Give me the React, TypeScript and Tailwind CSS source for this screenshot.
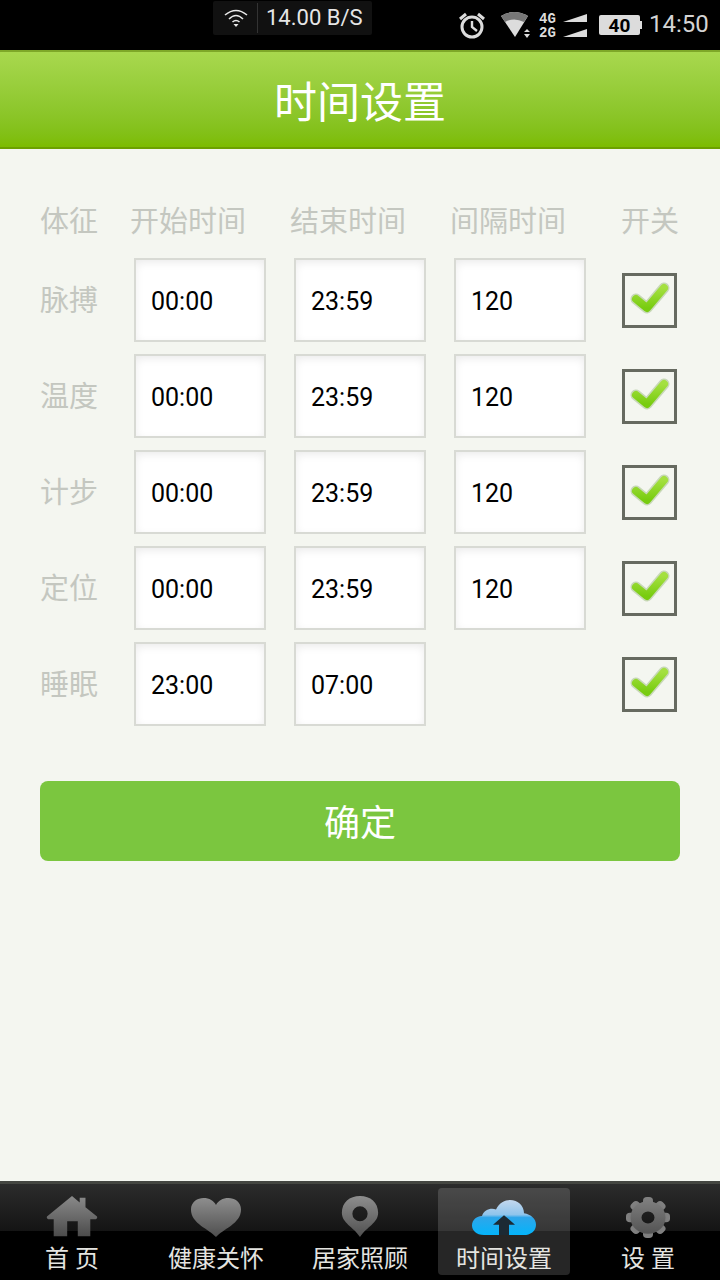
import React from "react";

const cjk = "font-['Roboto','Noto_Sans_CJK_SC',sans-serif]";

function Grad({ id, from, to }: { id: string; from: string; to: string }) {
  return (
    <linearGradient id={id} x1="0" y1="0" x2="0" y2="1">
      <stop offset="0" stopColor={from} />
      <stop offset="1" stopColor={to} />
    </linearGradient>
  );
}

function Field({ value }: { value: string }) {
  return (
    <div className="w-[132px] h-[84px] shrink-0 flex items-center pl-[15px] pt-[4px] text-[25px] text-black bg-white border-2 border-[#d8dad4] shadow-[inset_0_3px_10px_-1px_rgba(0,0,0,0.09)] font-['Roboto',sans-serif]">
      {value}
    </div>
  );
}

function Check() {
  return (
    <div className="w-[55px] h-[55px] shrink-0 border-[3px] border-[#666a60] flex items-center justify-center">
      <svg width="42" height="36" viewBox="0 0 42 36">
        <defs>
          <Grad id="chk" from="#a4e040" to="#78cc10" />
        </defs>
        <path d="M7 17 L18 26 L35 6" fill="none" stroke="#c8d8b8" strokeWidth="11" strokeLinecap="round" strokeLinejoin="round" />
        <path d="M7 17 L18 26 L35 6" fill="none" stroke="url(#chk)" strokeWidth="8" strokeLinejoin="round" strokeLinecap="round" />
      </svg>
    </div>
  );
}

function Row({ label, a, b, c }: { label: string; a: string; b: string; c?: string }) {
  return (
    <div className="flex items-center h-[84px] mb-[12px]">
      <div className="w-[94px] shrink-0 pt-[2px] text-[29px] leading-none text-[#c4c7c0]">{label}</div>
      <div className="flex gap-[28px] w-[488px] shrink-0">
        <Field value={a} />
        <Field value={b} />
        {c ? <Field value={c} /> : null}
      </div>
      <Check />
    </div>
  );
}

function HomeIcon() {
  return (
    <svg width="52" height="43" viewBox="0 0 54 46" preserveAspectRatio="none">
      <defs>
        <Grad id="ic1" from="#8a8a8a" to="#4c4c4c" />
      </defs>
      <path fillRule="evenodd" d="M27 1 L35 8 L35 3 L41 3 L41 13 L53 23 Q54 26 50 26 L46 26 L46 44 L33 44 L33 28 L22 28 L22 44 L8 44 L8 26 L4 26 Q0 26 1 23 Z" fill="url(#ic1)" />
    </svg>
  );
}

function HeartIcon() {
  return (
    <svg width="52" height="41" viewBox="0 0 54 46" preserveAspectRatio="none">
      <defs>
        <Grad id="ic2" from="#8e8e8e" to="#4e4e4e" />
      </defs>
      <path d="M27 45 C20 36 1 30 1 14 C1 5 8 1 14 1 C20 1 25 4 27 9 C29 4 34 1 40 1 C46 1 53 5 53 14 C53 30 34 36 27 45 Z" fill="url(#ic2)" />
    </svg>
  );
}

function PinIcon() {
  return (
    <svg width="42" height="43" viewBox="0 0 44 46" preserveAspectRatio="none">
      <defs>
        <Grad id="ic3" from="#8e8e8e" to="#505050" />
      </defs>
      <path fillRule="evenodd" d="M22 45 C15 34 3 30 3 19 C3 8 11 1 22 1 C33 1 41 8 41 19 C41 30 29 34 22 45 Z M22 12 A8 8 0 1 0 22 28 A8 8 0 1 0 22 12 Z" fill="url(#ic3)" />
    </svg>
  );
}

function CloudIcon() {
  return (
    <svg width="64" height="36" viewBox="0 0 64 38" className="mb-[2px]" preserveAspectRatio="none">
      <defs>
        <linearGradient id="ic4" x1="0" y1="0" x2="0" y2="1">
          <stop offset="0" stopColor="#c4d8ee" />
          <stop offset="0.42" stopColor="#8fc4ec" />
          <stop offset="0.5" stopColor="#2ea6ea" />
          <stop offset="1" stopColor="#04b4fa" />
        </linearGradient>
      </defs>
      <path d="M12 37 C4 37 0 32 0 27 C0 21 5 17 10 17 C12 10 19 8 24 10 C27 3 33 0 38 0 C46 0 52 6 52 14 C59 15 64 20 64 26 C64 33 58 37 52 37 Z" fill="url(#ic4)" />
      <path d="M32 16 L43 26 L37 26 L37 37 L27 37 L27 26 L21 26 Z" fill="#1c2a34" />
    </svg>
  );
}

function GearIcon() {
  const teeth = [0, 45, 90, 135, 180, 225, 270, 315];
  return (
    <svg width="46" height="41" viewBox="0 0 46 44" preserveAspectRatio="none">
      <defs>
        <linearGradient id="ic5" gradientUnits="userSpaceOnUse" x1="0" y1="0" x2="0" y2="44">
          <stop offset="0" stopColor="#828282" />
          <stop offset="1" stopColor="#4e4e4e" />
        </linearGradient>
      </defs>
      {teeth.map((t) => (
        <rect key={t} x="18" y="0" width="10" height="12" rx="4" fill="url(#ic5)" transform={`rotate(${t} 23 22)`} />
      ))}
      <circle cx="23" cy="22" r="12" fill="none" stroke="url(#ic5)" strokeWidth="11" />
    </svg>
  );
}

function Tab({ label, active, icon }: { label: string; active?: boolean; icon: React.ReactNode }) {
  return (
    <div className="relative w-[144px] h-full flex flex-col items-center">
      {active ? (
        <div className="absolute left-[6px] top-[4px] w-[132px] h-[87px] rounded-[4px] bg-white/15" />
      ) : null}
      <div className="relative h-[44px] mt-[10px] flex items-end justify-center">{icon}</div>
      <div className="relative mt-[4px] text-[24px] leading-[34px] text-[#e4e4e0] whitespace-pre">{label}</div>
    </div>
  );
}

export default function App() {
  return (
    <div className={`w-[720px] h-[1280px] flex flex-col overflow-hidden bg-[#f4f6f0] ${cjk}`}>
      {/* status bar */}
      <div className="h-[50px] shrink-0 bg-black flex items-start relative">
        <div className="ml-[213px] mt-[1px] w-[159px] h-[34px] bg-[#111111] rounded-[2px] flex items-center">
          <div className="w-[44px] flex justify-center pl-[2px]">
            <svg width="24" height="20" viewBox="0 0 24 20" fill="none" stroke="#e8e8e8" strokeWidth="1.6">
              <path d="M1 7 Q12 -2 23 7" />
              <path d="M5 11 Q12 4 19 11" />
              <path d="M8.5 14 Q12 11 15.5 14" />
              <path d="M12 19 L9.5 16 L14.5 16 Z" fill="#e8e8e8" stroke="none" />
            </svg>
          </div>
          <div className="w-px h-[30px] bg-[#333333]" />
          <div className="ml-[8px] text-[22px] leading-none text-[#e6e6e6] font-['Roboto',sans-serif]">14.00 B/S</div>
        </div>
        <div className="ml-[86px] mt-[12px] flex items-start">
          <svg width="28" height="27" viewBox="0 0 28 27" fill="none" stroke="#dcdcdc">
            <circle cx="14" cy="15" r="10" strokeWidth="3" />
            <path d="M14 9 L14 15 L19 19" strokeWidth="2.4" />
            <path d="M2 7 L8 2 M26 7 L20 2" strokeWidth="3" />
          </svg>
          <svg className="ml-[15px]" width="30" height="26" viewBox="0 0 30 26">
            <path d="M0 4 Q13 -4 27 4 L14 25 Z" fill="#dcdcdc" />
            <path d="M0 4 Q13 -4 27 4 L23 10 Q13 5 4 10 Z" fill="#777777" />
            <path d="M26 17 L29 20 L23 20 Z M26 26 L29 22 L23 22 Z" fill="#dcdcdc" />
          </svg>
          <div className="ml-[8px] w-[20px] flex flex-col text-[14px] leading-[14px] font-bold text-[#dcdcdc] font-['Liberation_Mono',monospace]">
            <span>4G</span>
            <span>2G</span>
          </div>
          <svg className="ml-[4px]" width="25" height="26" viewBox="0 0 25 26" fill="#dcdcdc">
            <path d="M0 10 L24 2 L24 10 Z" />
            <path d="M0 25 L24 17 L24 25 Z" />
          </svg>
          <div className="ml-[11px] mt-[3px] flex items-center">
            <div className="w-[41px] h-[20px] rounded-[2px] bg-[#dcdcdc] flex items-center justify-center text-[19px] leading-none font-bold text-black font-['Roboto',sans-serif]">40</div>
            <div className="w-[2px] h-[8px] bg-[#dcdcdc]" />
          </div>
          <div className="ml-[7px] -mt-[1px] text-[24px] leading-[26px] text-[#d4d4d4] font-['Roboto',sans-serif]">14:50</div>
        </div>
      </div>

      {/* header */}
      <div className="h-[99px] shrink-0 flex items-center justify-center pt-[7px] border-t-2 border-b-2 border-t-[#7ea828] border-b-[#6ca000] bg-gradient-to-b from-[#a8d84e] to-[#7cbc00]">
        <span className="text-[43px] leading-none text-white">时间设置</span>
      </div>

      {/* table */}
      <div className="flex-1 pl-[40px] pr-[40px]">
        <div className="flex items-center h-[29px] mt-[59px] mb-[21px] text-[29px] leading-none text-[#c4c7c0] whitespace-nowrap">
          <span className="w-[90px]">体征</span>
          <span className="w-[160px]">开始时间</span>
          <span className="w-[160px]">结束时间</span>
          <span className="w-[171px]">间隔时间</span>
          <span>开关</span>
        </div>
        <Row label="脉搏" a="00:00" b="23:59" c="120" />
        <Row label="温度" a="00:00" b="23:59" c="120" />
        <Row label="计步" a="00:00" b="23:59" c="120" />
        <Row label="定位" a="00:00" b="23:59" c="120" />
        <Row label="睡眠" a="23:00" b="07:00" />
        <div className="mt-[55px] h-[80px] rounded-[8px] bg-[#7bc63f] flex items-center justify-center pt-[5px] text-[36px] leading-none text-white">
          确定
        </div>
      </div>

      {/* tab bar */}
      <div className="h-[99px] shrink-0 flex border-t-[3px] border-[#444641] bg-[linear-gradient(to_bottom,#2c2c2c_0,#141414_47px,#000000_47px)]">
        <Tab label="首 页" icon={<HomeIcon />} />
        <Tab label="健康关怀" icon={<HeartIcon />} />
        <Tab label="居家照顾" icon={<PinIcon />} />
        <Tab label="时间设置" active icon={<CloudIcon />} />
        <Tab label="设 置" icon={<GearIcon />} />
      </div>
    </div>
  );
}
